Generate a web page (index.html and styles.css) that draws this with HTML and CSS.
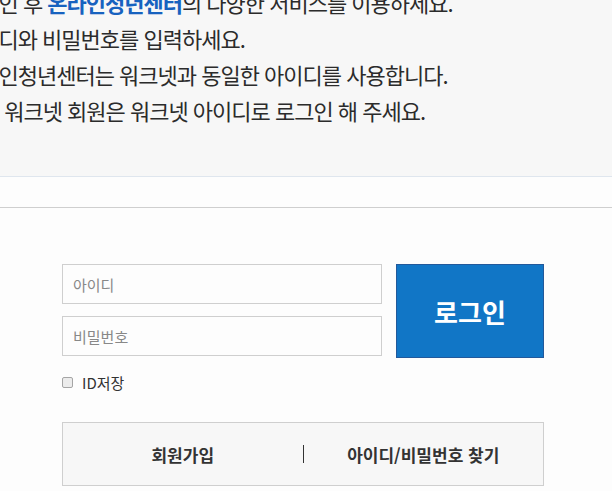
FILE: index.html
```html
<!DOCTYPE html>
<html lang="ko">
<head>
    <meta charset="UTF-8">
    <meta name="viewport" content="width=device-width, initial-scale=1.0">
    <title>로그인</title>
    <link rel="stylesheet" href="styles.css">
</head>
<body>
    <div class="guide">
        <ul class="guide-list">
            <li>로그인 후 <strong>온라인청년센터</strong>의 다양한 서비스를 이용하세요.</li>
            <li>아이디와 비밀번호를 입력하세요.</li>
            <li>온라인청년센터는 워크넷과 동일한 아이디를 사용합니다.</li>
            <li class="note"><span class="mark">※</span> 워크넷 회원은 워크넷 아이디로 로그인 해 주세요.</li>
        </ul>
    </div>
    <div class="gap"></div>

    <form class="login">
        <div class="login-row">
            <div class="fields">
                <input type="text" id="userId" placeholder="아이디">
                <input type="password" id="userPw" placeholder="비밀번호">
            </div>
            <button type="button" class="btn-login">로그인</button>
        </div>
        <label class="save-id"><input type="checkbox" id="saveId"> ID저장</label>
        <div class="links">
            <a href="#">회원가입</a>
            <span class="bar"></span>
            <a href="#">아이디/비밀번호 찾기</a>
        </div>
    </form>
</body>
</html>
```

FILE: styles.css
```css
body {
    font-family: "Noto Sans CJK KR", "Noto Sans", sans-serif;
    background-color: #fdfdfd;
    color: #333;
    margin: 0;
    overflow: hidden;
}
.guide {
    background-color: #f7f7f7;
    border-bottom: 1px solid #dfe6ee;
    height: 176px;
    overflow: hidden;
}
.guide-list {
    list-style: none;
    margin: -16px 0 0 -40px;
    padding: 0;
    font-size: 22px;
    line-height: 36px;
    letter-spacing: -1px;
    color: #2b2b2b;
    white-space: nowrap;
}
.guide-list strong {
    color: #1762bf;
}
.guide-list .note {
    margin-left: 18px;
}
.mark {
    color: #8cc3e8;
}
.gap {
    height: 30px;
    border-bottom: 1px solid #cfcfcf;
}
.login {
    width: 482px;
    margin: 56px 0 0 62px;
}
.login-row {
    display: flex;
    gap: 14px;
}
.fields {
    width: 320px;
    display: flex;
    flex-direction: column;
    gap: 12px;
}
.fields input {
    height: 40px;
    box-sizing: border-box;
    border: 1px solid #cfcfcf;
    background: #fdfdfd;
    padding: 0 10px;
    font-family: inherit;
    font-size: 15px;
    color: #333;
}
.fields input::placeholder {
    color: #888;
}
.btn-login {
    width: 148px;
    height: 94px;
    background-color: #1176c6;
    border: 1px solid #22599b;
    color: #fff;
    font-family: inherit;
    font-size: 26px;
    font-weight: bold;
    cursor: pointer;
}
.save-id {
    display: flex;
    align-items: center;
    gap: 9px;
    margin-top: 14px;
    font-size: 15px;
    color: #333;
}
.save-id input {
    appearance: none;
    margin: 0;
    width: 11px;
    height: 11px;
    border: 1px solid #a5a5a5;
    border-radius: 2px;
    background-color: #ececec;
}
.links {
    display: flex;
    align-items: center;
    margin-top: 29px;
    height: 62px;
    border: 1px solid #cfcfcf;
    background-color: #f7f7f7;
}
.links a {
    flex: 1;
    text-align: center;
    font-size: 17px;
    font-weight: bold;
    color: #333;
    text-decoration: none;
}
.bar {
    width: 1px;
    height: 18px;
    background-color: #333;
}
```
